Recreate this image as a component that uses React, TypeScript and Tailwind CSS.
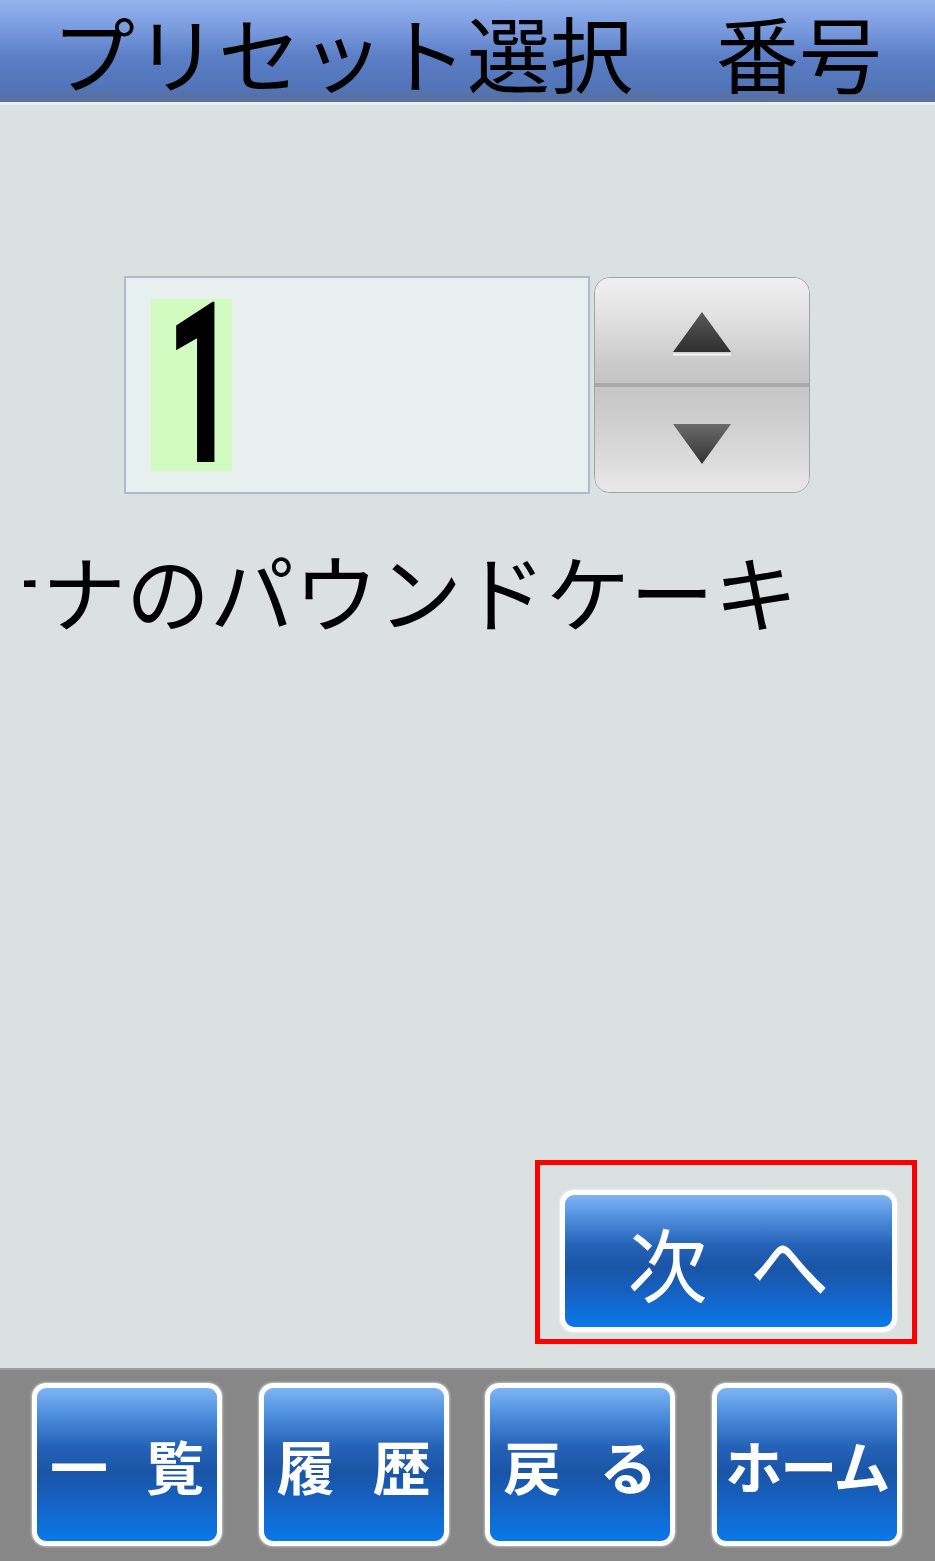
import { ReactNode } from 'react'

const jp = "font-['Noto_Sans_CJK_JP',sans-serif]"

function BlueButton({ children, className }: { children: ReactNode; className: string }) {
  return (
    <div
      className={`flex items-center justify-center border-[5px] border-white rounded-[14px] shadow-[0_0_3px_rgba(255,255,255,0.9)] bg-[linear-gradient(to_bottom,#7fb4f4_0%,#4d8ddc_18%,#2563b8_38%,#1a55a6_55%,#1562c4_75%,#0b78e8_100%)] text-white ${className}`}
    >
      {children}
    </div>
  )
}

export default function App() {
  const navItems: [string, string][] = [
    ['一', '覧'],
    ['履', '歴'],
    ['戻', 'る'],
  ]

  return (
    <div className={`w-[935px] h-[1561px] flex flex-col bg-[#dae1e0] overflow-hidden ${jp}`}>
      {/* title bar */}
      <div className="h-[102px] shrink-0 flex items-center pl-[52px] bg-[linear-gradient(to_bottom,#94b3f0_0%,#7899dc_30%,#5b7ec6_55%,#5274b8_85%,#5a6f9c_100%)]">
        <span className="text-[83px] leading-[100px] text-black whitespace-nowrap">プリセット選択　番号</span>
      </div>
      <div className="h-[3px] shrink-0 bg-[#e9eded]" />

      {/* body */}
      <div className="flex-1 flex flex-col">
        <div className="flex items-start pt-[171px] pl-[124px] gap-[4px]">
          <div className="w-[466px] h-[218px] border-2 border-[#a9bdcc] bg-[#e7efef] pt-[21px] pl-[25px]">
            <div className="w-[81px] h-[172px] bg-[#d1fbc0] flex justify-center">
              <span className="font-[Roboto] font-bold text-[225px] leading-[172px] text-black scale-x-[0.55] ml-[-12px] mr-[-32px]">
                1
              </span>
            </div>
          </div>
          <div className="w-[216px] h-[216px] mt-[1px] rounded-[16px] border-[1.5px] border-[#a3a3a3] overflow-hidden flex flex-col">
            <div className="flex-1 flex items-center justify-center bg-[linear-gradient(to_bottom,#f0f0f0_0%,#e2e2e2_35%,#cbcbcb_80%,#c4c4c4_100%)]">
              <svg width="62" height="46" viewBox="0 0 62 46" className="mt-[4px]">
                <defs>
                  <linearGradient id="tu" x1="0" y1="0" x2="0" y2="1">
                    <stop offset="0" stopColor="#5a5a5a" />
                    <stop offset="1" stopColor="#2e2e2e" />
                  </linearGradient>
                </defs>
                <polygon points="31,2 60,42 2,42" fill="url(#tu)" />
                <line x1="2" y1="44.5" x2="60" y2="44.5" stroke="#f4f4f4" strokeWidth="2" />
              </svg>
            </div>
            <div className="h-[4px] bg-[#a9a9a9]" />
            <div className="flex-1 flex items-center justify-center bg-[linear-gradient(to_bottom,#c6c6c6_0%,#cdcdcd_30%,#dcdcdc_70%,#e8e8e8_100%)]">
              <svg width="62" height="44" viewBox="0 0 62 44" className="mt-[8px]">
                <defs>
                  <linearGradient id="td" x1="0" y1="0" x2="0" y2="1">
                    <stop offset="0" stopColor="#6a6a6a" />
                    <stop offset="1" stopColor="#333333" />
                  </linearGradient>
                </defs>
                <polygon points="2,2 60,2 31,42" fill="url(#td)" />
              </svg>
            </div>
          </div>
        </div>

        {/* preset name, scrolled */}
        <div className="mt-[54px] ml-[24px] w-[880px] overflow-hidden">
          <div className="ml-[-150px] text-[84px] leading-[84px] text-black whitespace-nowrap">
            バナナのパウンドケーキ
          </div>
        </div>

        <div className="flex-1" />

        {/* next button */}
        <div className="flex justify-end pr-[18px] pb-[24px]">
          <div className="w-[382px] h-[184px] border-[5px] border-[#ff0000] pt-[25px] pl-[20px] pr-[15px] pb-[7px] flex">
            <BlueButton className="flex-1 rounded-[12px] gap-[42px] text-[80px] leading-none">
              <span>次</span>
              <span>へ</span>
            </BlueButton>
          </div>
        </div>
      </div>

      {/* bottom nav */}
      <div className="h-[193px] shrink-0 bg-[#878787] border-t-2 border-[#9c9c9c] flex items-start justify-between pt-[13px] pl-[32px] pr-[33px]">
        {navItems.map(([a, b]) => (
          <BlueButton key={a} className="w-[190px] h-[163px] gap-[38px] text-[58px] font-bold leading-none">
            <span>{a}</span>
            <span>{b}</span>
          </BlueButton>
        ))}
        <BlueButton className="w-[190px] h-[163px] text-[57px] font-bold leading-none tracking-[-2px]">
          <span>ホーム</span>
        </BlueButton>
      </div>
    </div>
  )
}
